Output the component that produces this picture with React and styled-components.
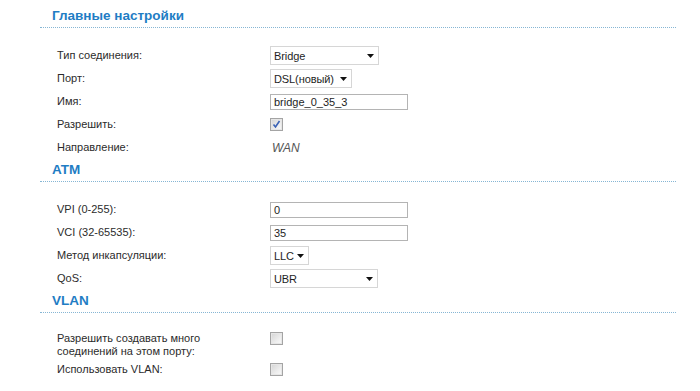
import styled, { createGlobalStyle } from "styled-components";

const GlobalStyle = createGlobalStyle`
  body {
    margin: 0;
    background: #fff;
    font-family: "Liberation Sans", Arial, sans-serif;
    font-size: 11px;
    color: #2b2b2b;
  }
`;

const Page = styled.div`
  width: 636px;
  padding: 5px 0 0 40px;
`;

const Section = styled.section`
  display: flex;
  flex-direction: column;
`;

const Heading = styled.h2`
  margin: 0;
  padding-left: 12px;
  height: 22px;
  line-height: 22px;
  font-size: 13.5px;
  font-weight: bold;
  color: #1f7dc4;
  border-bottom: 1px dotted #86b6d4;
`;

const Rows = styled.div`
  display: flex;
  flex-direction: column;
  padding: 16px 0 0 17px;
`;

const Row = styled.div`
  display: grid;
  grid-template-columns: 213px 1fr;
  align-items: ${(p) => (p.$top ? "start" : "center")};
  min-height: ${(p) => (p.$h ? p.$h : 23)}px;
  padding-top: ${(p) => (p.$top ? 3 : 0)}px;
  box-sizing: border-box;
`;

const Label = styled.div`
  line-height: 13px;
  color: #2b2b2b;
`;

const SelectBox = styled.div`
  width: ${(p) => p.$w}px;
  height: 19px;
  box-sizing: border-box;
  border: 1px solid #d6d6d6;
  background: #fff;
  display: flex;
  align-items: center;
  justify-content: space-between;
  gap: 3px;
  padding: 0 4px 0 3px;
  color: #1e1e1e;
  letter-spacing: -0.1px;
`;

const TextField = styled.div`
  width: 138px;
  height: 16px;
  box-sizing: border-box;
  border: 1px solid #b4b4b4;
  display: flex;
  align-items: center;
  padding-left: 3px;
  color: #1e1e1e;
`;

const Check = styled.span`
  width: 13px;
  height: 13px;
  box-sizing: border-box;
  border: 1px solid #a4a4a4;
  background: linear-gradient(135deg, #d4d4d4 0%, #efefef 65%, #fafafa 100%);
  box-shadow: inset 0 0 0 1px #e6e6e6;
  display: flex;
  align-items: center;
  justify-content: center;
`;

const Plain = styled.span`
  font-style: italic;
  font-size: 12px;
  color: #555;
  padding-left: 2px;
`;

function Arrow() {
  return (
    <svg width="7" height="4" viewBox="0 0 7 4">
      <path d="M0 0H7L3.5 4Z" fill="#111" />
    </svg>
  );
}

function Select({ width, value }) {
  return (
    <SelectBox $w={width}>
      <span>{value}</span>
      <Arrow />
    </SelectBox>
  );
}

function Checkbox({ checked }) {
  return (
    <Check>
      {checked && (
        <svg width="9" height="9" viewBox="0 0 9 9">
          <path d="M1.5 4.5L3.5 7L7.5 1" stroke="#3a62b5" strokeWidth="1.6" fill="none" />
        </svg>
      )}
    </Check>
  );
}

export default function App() {
  return (
    <>
      <GlobalStyle />
      <Page>
        <Section>
          <Heading>Главные настройки</Heading>
          <Rows>
            <Row>
              <Label>Тип соединения:</Label>
              <Select width={109} value="Bridge" />
            </Row>
            <Row>
              <Label>Порт:</Label>
              <Select width={82} value="DSL(новый)" />
            </Row>
            <Row>
              <Label>Имя:</Label>
              <TextField>bridge_0_35_3</TextField>
            </Row>
            <Row>
              <Label>Разрешить:</Label>
              <Checkbox checked />
            </Row>
            <Row>
              <Label>Направление:</Label>
              <Plain>WAN</Plain>
            </Row>
          </Rows>
        </Section>

        <Section>
          <Heading>ATM</Heading>
          <Rows>
            <Row>
              <Label>VPI (0-255):</Label>
              <TextField>0</TextField>
            </Row>
            <Row>
              <Label>VCI (32-65535):</Label>
              <TextField>35</TextField>
            </Row>
            <Row>
              <Label>Метод инкапсуляции:</Label>
              <Select width={39} value="LLC" />
            </Row>
            <Row>
              <Label>QoS:</Label>
              <Select width={108} value="UBR" />
            </Row>
          </Rows>
        </Section>

        <Section>
          <Heading>VLAN</Heading>
          <Rows>
            <Row $top $h={29}>
              <Label>
                Разрешить создавать много
                <br />
                соединений на этом порту:
              </Label>
              <Checkbox />
            </Row>
            <Row>
              <Label>Использовать VLAN:</Label>
              <Checkbox />
            </Row>
          </Rows>
        </Section>
      </Page>
    </>
  );
}
